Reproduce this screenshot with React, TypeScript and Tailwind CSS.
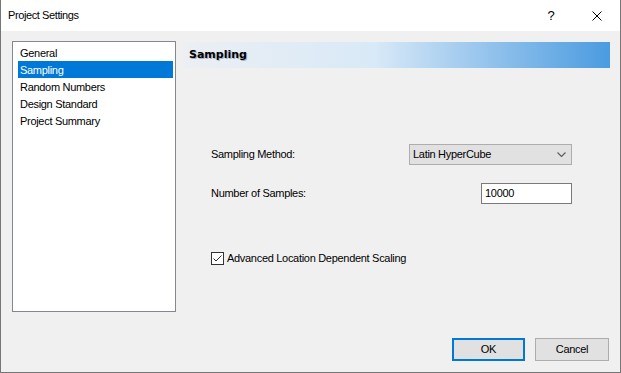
const pages = ["General", "Sampling", "Random Numbers", "Design Standard", "Project Summary"];

function CloseIcon() {
  return (
    <svg width="10" height="10" viewBox="0 0 10 10" className="block">
      <path d="M0.5 0.5 L9.5 9.5 M9.5 0.5 L0.5 9.5" stroke="#000" strokeWidth="1" fill="none" />
    </svg>
  );
}

function Chevron() {
  return (
    <svg width="9" height="5" viewBox="0 0 9 5" className="block">
      <polyline points="0.5,0.5 4.5,4.5 8.5,0.5" stroke="#606060" strokeWidth="1.2" fill="none" />
    </svg>
  );
}

export default function App() {
  return (
    <div className="flex h-[373px] w-[621px] flex-col border-x border-b border-[#767676] bg-[#f0f0f0] font-['Liberation_Sans',Arial,sans-serif] text-[11px] tracking-[-0.3px] text-black">
      {/* title bar */}
      <div className="flex h-[31px] shrink-0 items-center bg-white">
        <span className="pl-[7px] text-[11px] tracking-[-0.4px]">Project Settings</span>
        <div className="ml-auto flex h-full">
          <div className="flex w-[46px] items-center justify-center text-[13px]">?</div>
          <div className="flex w-[46px] items-center justify-center">
            <CloseIcon />
          </div>
        </div>
      </div>

      {/* body */}
      <div className="flex flex-1 gap-[7px] pl-[11px] pr-[10px] pt-[10px]">
        <div className="h-[271px] w-[164px] border border-[#828790] bg-white pt-[2px]">
          {pages.map((p) => (
            <div
              key={p}
              className={
                p === "Sampling"
                  ? "ml-[5px] mr-[2px] h-[17px] bg-[#0078d7] px-[2px] leading-[18px] text-white"
                  : "ml-[5px] mr-[2px] h-[17px] px-[2px] leading-[18px]"
              }
            >
              {p}
            </div>
          ))}
        </div>

        <div className="flex flex-1 flex-col pt-[1px]">
          <div className="flex h-[26px] items-center bg-[linear-gradient(to_right,#eceff3_0%,#d8e9f7_45%,#4a9be0_100%)] pl-[6px]">
            <span className="font-['DejaVu_Sans',Verdana,sans-serif] text-[11px] font-bold tracking-normal [text-shadow:1px_1px_0_#a6b4c6]">
              Sampling
            </span>
          </div>

          <div className="mt-[76px] flex h-[21px] items-center justify-between pl-[28px] pr-[38px]">
            <span>Sampling Method:</span>
            <div className="flex h-[21px] w-[163px] items-center justify-between border border-[#adadad] bg-[#e1e1e1] pl-[3px] pr-[5px]">
              <span>Latin HyperCube</span>
              <Chevron />
            </div>
          </div>

          <div className="mt-[18px] flex h-[21px] items-center justify-between pl-[28px] pr-[38px]">
            <span>Number of Samples:</span>
            <div className="flex h-[21px] w-[91px] items-center border border-[#7a7a7a] bg-white px-[3px]">
              10000
            </div>
          </div>

          <div className="mt-[48px] flex h-[13px] items-center gap-[3px] pl-[28px]">
            <div className="flex h-[13px] w-[13px] items-center justify-center border border-[#333] bg-white">
              <svg width="11" height="11" viewBox="0 0 11 11" className="block">
                <polyline points="1.5,5.5 4,8 9.5,2.5" stroke="#333" strokeWidth="1" fill="none" />
              </svg>
            </div>
            <span>Advanced Location Dependent Scaling</span>
          </div>
        </div>
      </div>

      {/* buttons */}
      <div className="flex justify-end gap-[10px] pb-[11px] pr-[11px]">
        <button className="h-[23px] w-[73px] border-2 border-[#0078d7] bg-[#e1e1e1]">OK</button>
        <button className="h-[23px] w-[74px] border border-[#adadad] bg-[#e1e1e1]">Cancel</button>
      </div>
    </div>
  );
}
